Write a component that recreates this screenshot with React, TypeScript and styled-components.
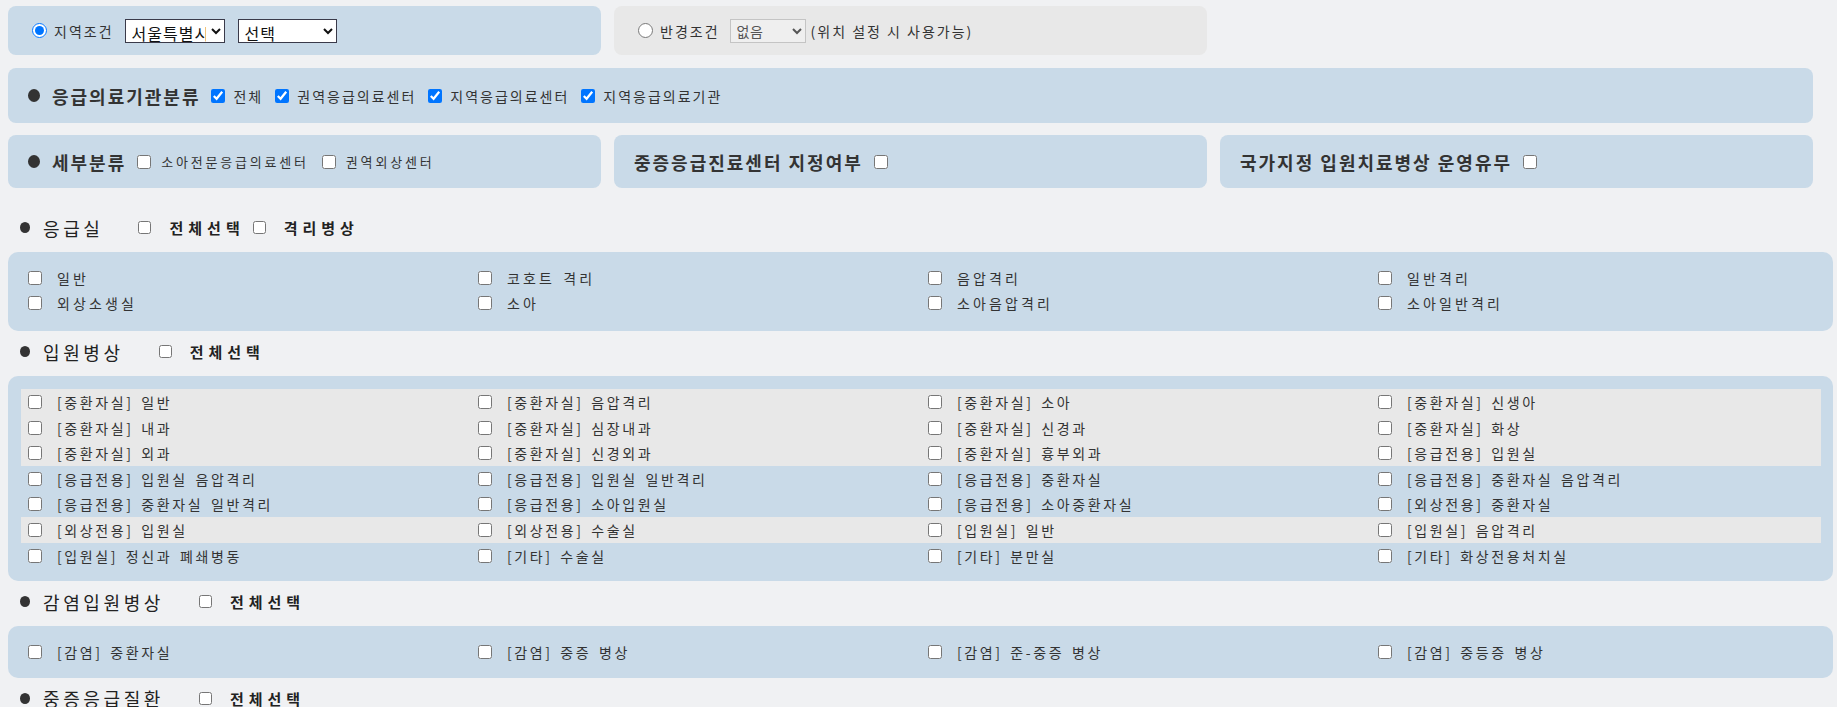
import React from "react";
import styled, { createGlobalStyle } from "styled-components";

const GlobalStyle = createGlobalStyle`
  html, body {
    margin: 0;
    padding: 0;
    background: #f0f1f3;
  }
  body {
    font-family: "Noto Sans CJK KR", "Noto Sans", sans-serif;
    color: #333;
  }
`;

const Page = styled.div`
  padding: 6px 4px 0 8px;
`;

const PanelRow = styled.div<{ $gap?: number }>`
  display: flex;
  gap: 13px;
  margin-bottom: ${(p) => p.$gap ?? 13}px;
`;

const Panel = styled.div<{ $grey?: boolean; $width?: number; $height: number; $pad?: number }>`
  display: flex;
  align-items: center;
  box-sizing: border-box;
  width: ${(p) => p.$width ?? 593}px;
  height: ${(p) => p.$height}px;
  padding-left: ${(p) => p.$pad ?? 20}px;
  background: ${(p) => (p.$grey ? "#e8e8e8" : "#c9dae8")};
  border-radius: 8px;
  white-space: nowrap;
`;

const Radio = styled.input`
  margin: 0 7px 0 -1px;
  width: 15px;
  height: 15px;
`;

const Check = styled.input<{ $size?: number }>`
  margin: 0;
  width: ${(p) => p.$size ?? 14}px;
  height: ${(p) => p.$size ?? 14}px;
  flex-shrink: 0;
`;

const Text = styled.span<{ $size?: number; $gap?: number }>`
  font-size: ${(p) => p.$size ?? 14}px;
  letter-spacing: ${(p) => ((p.$size ?? 14) < 14 ? 2.8 : 2)}px;
  color: #333;
  margin-right: ${(p) => p.$gap ?? 0}px;
`;

const Select = styled.select<{ $width: number }>`
  box-sizing: border-box;
  width: ${(p) => p.$width}px;
  height: 24px;
  margin-right: 13px;
  padding: 0 2px;
  border: 1px solid #3a3a4a;
  border-radius: 0;
  background: #fff;
  color: #111;
  font-family: inherit;
  font-size: 16px;
  letter-spacing: 1px;

  &:disabled {
    opacity: 1;
    border-color: #c4c4c4;
    background: #efefef;
    color: #555;
    font-size: 14px;
    letter-spacing: 0.5px;
    margin-right: 5px;
  }
`;

const Dot = styled.span<{ $size: number }>`
  display: inline-block;
  flex-shrink: 0;
  width: ${(p) => p.$size}px;
  height: ${(p) => p.$size + 1}px;
  border-radius: 50%;
  background: #333;
`;

const PanelTitle = styled.span<{ $gap?: number }>`
  font-size: 18px;
  font-weight: bold;
  letter-spacing: 2px;
  color: #333;
  margin-left: ${(p) => p.$gap ?? 0}px;
  margin-right: 11px;
`;

const Option = styled.label<{ $gap?: number; $inner?: number }>`
  display: flex;
  align-items: center;
  gap: ${(p) => p.$inner ?? 8}px;
  margin-right: ${(p) => p.$gap ?? 12}px;
`;

const SectionHead = styled.div<{ $top?: number }>`
  display: flex;
  align-items: center;
  height: 45px;
  margin-top: ${(p) => p.$top ?? 0}px;
  padding: 0 0 4px 12px;
  box-sizing: border-box;
`;

const SectionTitle = styled.span`
  font-size: 18px;
  letter-spacing: 3.6px;
  color: #222;
  margin: 0 35px 0 13px;
`;

const AllOption = styled.label`
  display: flex;
  align-items: center;
  gap: 18px;
  margin-right: 8px;
  font-size: 15px;
  font-weight: bold;
  letter-spacing: 5px;
  color: #222;
`;

const GridBox = styled.div<{ $bottom?: number }>`
  background: #c9dae8;
  border-radius: 10px;
  padding: 13px 11px ${(p) => p.$bottom ?? 13}px 13px;
`;

const Grid = styled.div`
  display: grid;
  grid-template-columns: repeat(4, 450px);
`;

const Cell = styled.label<{ $striped?: boolean; $spread?: boolean }>`
  display: flex;
  align-items: center;
  gap: 15px;
  height: 25.6px;
  padding-left: 7px;
  background: ${(p) => (p.$striped ? "#e8e8e8" : "transparent")};
  font-size: 14px;
  letter-spacing: ${(p) => (p.$spread ? 3.1 : 2.6)}px;
  word-spacing: 2px;
  color: #333;
  white-space: nowrap;
`;

type Row = { striped?: boolean; items: string[] };

const emergency: Row[] = [
  { items: ["일반", "코호트 격리", "음압격리", "일반격리"] },
  { items: ["외상소생실", "소아", "소아음압격리", "소아일반격리"] },
];

const wards: Row[] = [
  { striped: true, items: ["[중환자실] 일반", "[중환자실] 음압격리", "[중환자실] 소아", "[중환자실] 신생아"] },
  { striped: true, items: ["[중환자실] 내과", "[중환자실] 심장내과", "[중환자실] 신경과", "[중환자실] 화상"] },
  { striped: true, items: ["[중환자실] 외과", "[중환자실] 신경외과", "[중환자실] 흉부외과", "[응급전용] 입원실"] },
  { items: ["[응급전용] 입원실 음압격리", "[응급전용] 입원실 일반격리", "[응급전용] 중환자실", "[응급전용] 중환자실 음압격리"] },
  { items: ["[응급전용] 중환자실 일반격리", "[응급전용] 소아입원실", "[응급전용] 소아중환자실", "[외상전용] 중환자실"] },
  { striped: true, items: ["[외상전용] 입원실", "[외상전용] 수술실", "[입원실] 일반", "[입원실] 음압격리"] },
  { items: ["[입원실] 정신과 폐쇄병동", "[기타] 수술실", "[기타] 분만실", "[기타] 화상전용처치실"] },
];

const infection: Row[] = [
  { items: ["[감염] 중환자실", "[감염] 중증 병상", "[감염] 준-중증 병상", "[감염] 중등증 병상"] },
];

const CheckGrid = ({ rows, spread, bottom }: { rows: Row[]; spread?: boolean; bottom?: number }) => (
  <GridBox $bottom={bottom}>
    <Grid>
      {rows.map((row, r) =>
        row.items.map((label, c) => (
          <Cell key={`${r}-${c}`} $striped={row.striped} $spread={spread}>
            <Check type="checkbox" />
            {label}
          </Cell>
        ))
      )}
    </Grid>
  </GridBox>
);

const Section = ({ title, top, extra }: { title: string; top?: number; extra?: string }) => (
  <SectionHead $top={top}>
    <Dot $size={10} />
    <SectionTitle>{title}</SectionTitle>
    <AllOption>
      <Check type="checkbox" $size={13} />
      전체선택
    </AllOption>
    {extra && (
      <AllOption>
        <Check type="checkbox" $size={13} />
        {extra}
      </AllOption>
    )}
  </SectionHead>
);

const App = () => (
  <>
    <GlobalStyle />
    <Page>
      <PanelRow>
        <Panel $height={49} $pad={25}>
          <Radio type="radio" name="cond" defaultChecked />
          <Text $gap={11}>지역조건</Text>
          <Select $width={100} defaultValue="seoul">
            <option value="seoul">서울특별시</option>
          </Select>
          <Select $width={99} defaultValue="">
            <option value="">선택</option>
          </Select>
        </Panel>
        <Panel $height={49} $pad={25} $grey>
          <Radio type="radio" name="cond" />
          <Text $gap={10}>반경조건</Text>
          <Select $width={76} disabled defaultValue="none">
            <option value="none">없음</option>
          </Select>
          <Text>(위치 설정 시 사용가능)</Text>
        </Panel>
      </PanelRow>

      <PanelRow $gap={12}>
        <Panel $height={55} $width={1805}>
          <Dot $size={12} />
          <PanelTitle $gap={12}>응급의료기관분류</PanelTitle>
          <Option>
            <Check type="checkbox" defaultChecked />
            <Text>전체</Text>
          </Option>
          <Option>
            <Check type="checkbox" defaultChecked />
            <Text>권역응급의료센터</Text>
          </Option>
          <Option>
            <Check type="checkbox" defaultChecked />
            <Text>지역응급의료센터</Text>
          </Option>
          <Option>
            <Check type="checkbox" defaultChecked />
            <Text>지역응급의료기관</Text>
          </Option>
        </Panel>
      </PanelRow>

      <PanelRow $gap={0}>
        <Panel $height={53}>
          <Dot $size={12} />
          <PanelTitle $gap={12}>세부분류</PanelTitle>
          <Option $gap={13} $inner={10}>
            <Check type="checkbox" />
            <Text $size={13}>소아전문응급의료센터</Text>
          </Option>
          <Option $inner={10}>
            <Check type="checkbox" />
            <Text $size={13}>권역외상센터</Text>
          </Option>
        </Panel>
        <Panel $height={53}>
          <PanelTitle>중증응급진료센터 지정여부</PanelTitle>
          <Check type="checkbox" />
        </Panel>
        <Panel $height={53}>
          <PanelTitle>국가지정 입원치료병상 운영유무</PanelTitle>
          <Check type="checkbox" />
        </Panel>
      </PanelRow>

      <Section title="응급실" top={19} extra="격리병상" />
      <CheckGrid rows={emergency} spread bottom={15} />

      <Section title="입원병상" />
      <CheckGrid rows={wards} />

      <Section title="감염입원병상" />
      <CheckGrid rows={infection} />

      <Section title="중증응급질환" />
    </Page>
  </>
);

export default App;
